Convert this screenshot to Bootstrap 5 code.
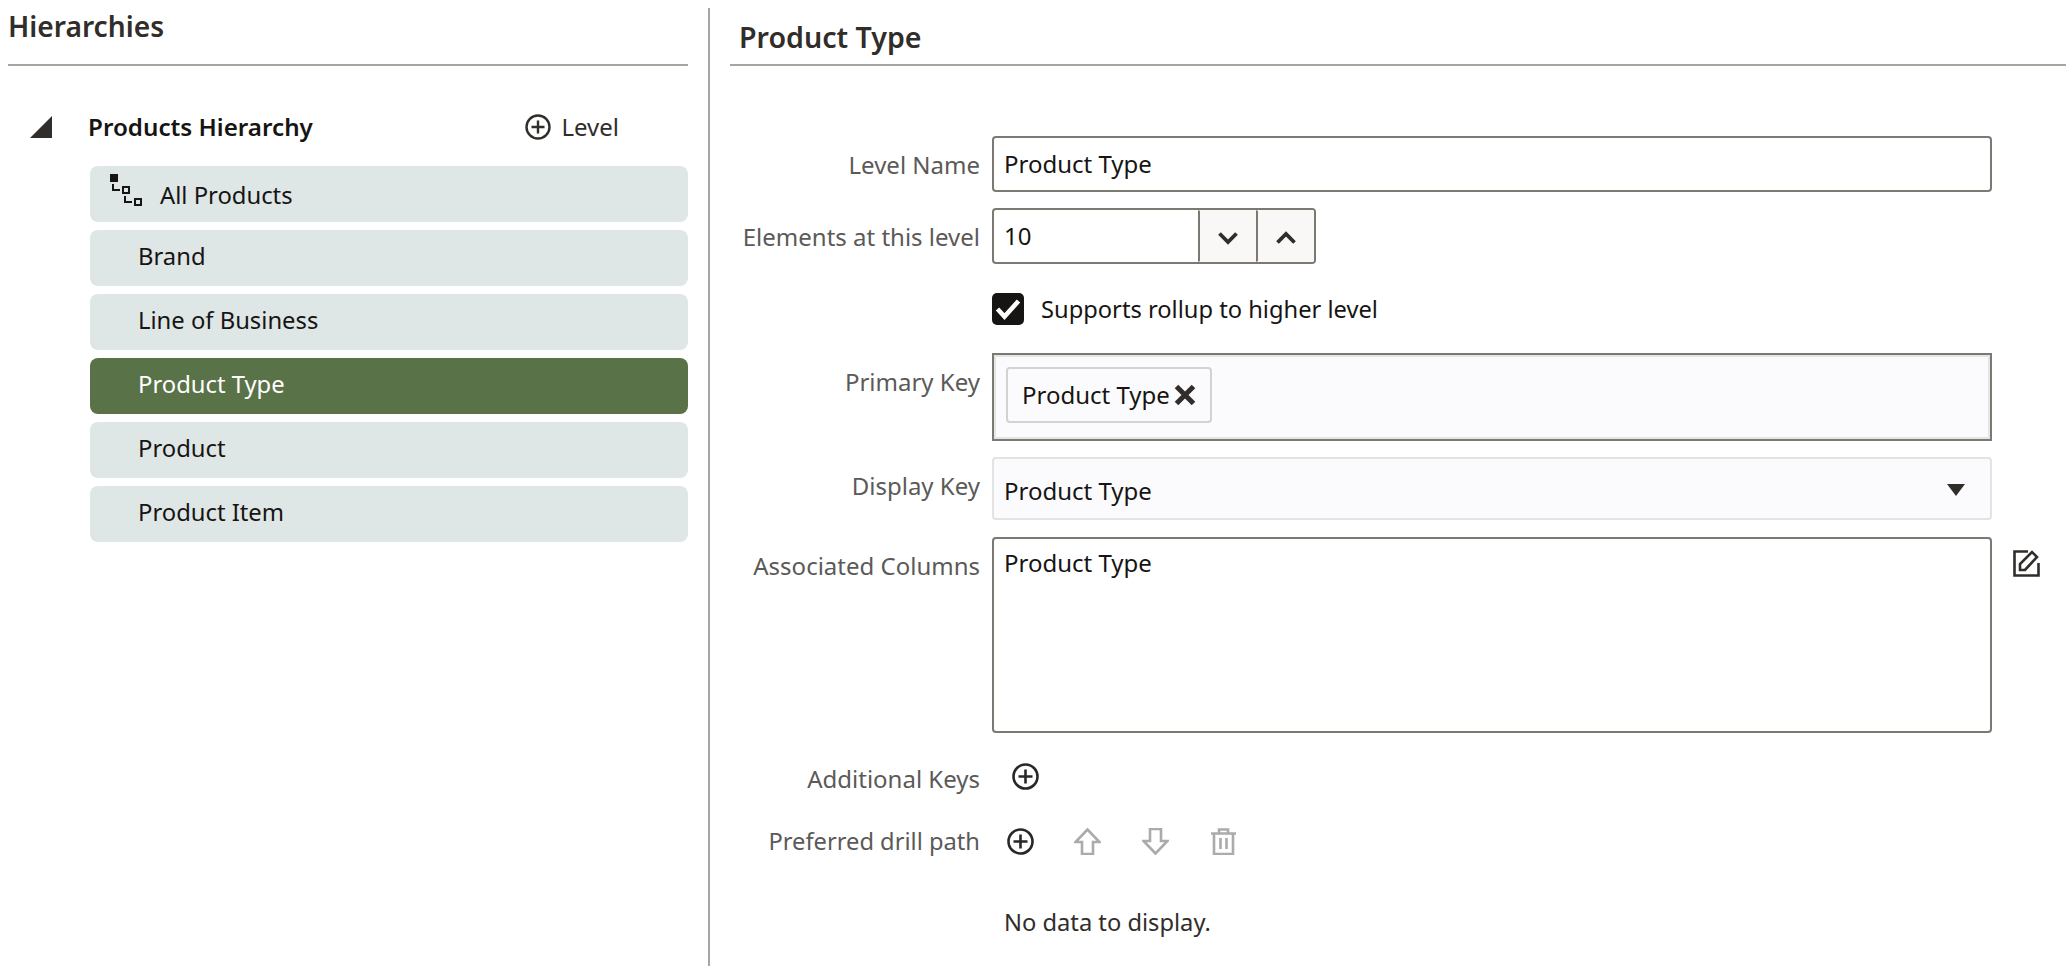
<!DOCTYPE html>
<html lang="en">
<head>
<meta charset="utf-8">
<title>Product Type</title>
<link href="https://cdn.jsdelivr.net/npm/bootstrap@5.3.0/dist/css/bootstrap.min.css" rel="stylesheet">
<style>
html,body{height:966px;overflow:hidden;background:#fff}
body{font-family:"Noto Sans","Open Sans",sans-serif;font-size:24px;color:#161513}
.shell{height:966px}
.pane-left{width:708px;padding:0 20px 0 8px;margin-top:8px;flex:none}
.divider{width:2px;background:#a8a5a0;margin-top:8px;flex:none}
.pane-right{flex:1;padding-left:20px;min-width:0}
.head-l{height:58px;border-bottom:2px solid #a8a5a0;font-size:28.200px;font-weight:600;line-height:37px;color:#312d2a}
.head-r{height:66px;border-bottom:2px solid #a8a5a0;font-size:28.600px;font-weight:600;line-height:74px;color:#312d2a;padding-left:9px}
.tree-head{height:50px;margin-top:36px;margin-bottom:14px}
.tree-tri{margin-left:22px;width:22px;height:22px;flex:none}
.tree-name{margin-left:36px;font-weight:600;color:#161513;font-size:24.200px}
.tree-add{margin-left:auto;margin-right:69px;color:#312d2a;font-size:24px;gap:10px}
.lvl{height:56px;margin-left:82px;margin-bottom:8px;border-radius:8px;background:#dfe6e6;padding-left:48px;line-height:53px;color:#161513;font-size:23.800px}
.lvl-on{background:#5a7248;color:#fff}
.lvl-root{padding-left:20px;line-height:59px}
.lvl-root svg{margin-top:8px;margin-right:18px;flex:none}
.fields{padding-right:74px;padding-top:70px}
.frow{display:flex;align-items:flex-start}
.flabel{width:250px;flex:none;margin-right:12px;text-align:right;color:#5b5a58;font-size:24px}
.lbl-a{padding-top:11px}
.lbl-drill{font-size:23.700px}
.fbody{flex:1;min-width:0}
.fbox.form-control{border:2px solid #7c7872;border-radius:4px;height:56px;padding:0 10px;line-height:52px;font-size:24px;color:#161513;background:#fff}
.stepper{width:324px;height:56px;border:2px solid #7c7872;border-radius:4px;overflow:hidden}
.stepper-val{flex:1;padding-left:10px;line-height:52px}
.stepper-btn{width:58px;flex:none;background:#f9f8f6;border-left:2px solid #7c7872;border-radius:0;padding:0}
.chk.form-check-input{width:32px;height:32px;margin:0;border:0;border-radius:5px;background-color:#161513;background-size:32px;background-image:url("data:image/svg+xml,%3csvg xmlns='http://www.w3.org/2000/svg' viewBox='0 0 32 32'%3e%3cpath fill='none' stroke='%23fff' stroke-width='4.600' d='M5.500 16l7 7.500L26.500 8'/%3e%3c/svg%3e")}
.chk-text{margin-left:17px;line-height:32px;font-size:23.700px}
.keybox{height:88px;border:2px solid #7c7872;box-shadow:inset 0 0 0 2px #e3e5e6;background:#fbfbfd;padding:12px 0 0 12px}
.keychip{height:56px;width:206px;border:2px solid #d0d2d4;border-radius:4px;background:#fbfbfd;padding-left:14px;line-height:52px;color:#161513}
.keychip svg{margin-left:4px}
.selbox{height:63px;border:2px solid #e2e3e5;border-radius:4px;background:#fbfbfd;padding:5px 25px 0 10px;line-height:58px}
.sel-arrow{margin-top:-3px}
.areabox.form-control{height:196px;border:2px solid #7c7872;border-radius:4px;padding:6px 10px;font-size:24px;line-height:36px;color:#161513;background:#fff}
.edit-wrap{width:0;position:relative;flex:none}
.edit-ico{position:absolute;left:21px;top:13px}
.drill-row svg{flex:none}
.nodata{margin-left:274px;margin-top:49px;line-height:36px;color:#312d2a;font-size:23.700px}
</style>
</head>
<body>
<div class="shell d-flex">
  <div class="pane-left">
    <div class="head-l">Hierarchies</div>
    <div class="tree-head d-flex align-items-center">
      <svg class="tree-tri" viewBox="0 0 22 22"><polygon points="22,0 22,22 0,22" fill="#312d2a"/></svg>
      <span class="tree-name">Products Hierarchy</span>
      <span class="tree-add d-flex align-items-center">
        <svg width="26" height="26" viewBox="0 0 26 26" fill="none" stroke="#312d2a" stroke-width="2.400"><circle cx="13" cy="13" r="11.500"/><path d="M13 6.500v13M6.500 13h13"/></svg>
        Level
      </span>
    </div>
    <div class="lvl lvl-root d-flex">
      <svg width="32" height="32" viewBox="0 0 32 32" fill="none" stroke="#161513" stroke-width="2"><rect width="8" height="8" fill="#161513" stroke="none"/><path d="M3 10v6h7"/><rect x="13" y="13" width="6" height="6"/><path d="M15 22v6h7"/><rect x="25" y="25" width="6" height="6"/></svg>
      All Products
    </div>
    <div class="lvl">Brand</div>
    <div class="lvl">Line of Business</div>
    <div class="lvl lvl-on">Product Type</div>
    <div class="lvl">Product</div>
    <div class="lvl">Product Item</div>
  </div>
  <div class="divider"></div>
  <div class="pane-right">
    <div class="head-r">Product Type</div>
    <div class="fields">
      <div class="frow mb-3">
        <div class="flabel lbl-a">Level Name</div>
        <div class="fbody"><div class="form-control fbox">Product Type</div></div>
      </div>
      <div class="frow">
        <div class="flabel lbl-a">Elements at this level</div>
        <div class="fbody">
          <div class="stepper d-flex">
            <div class="stepper-val">10</div>
            <button type="button" class="btn stepper-btn"><svg width="20" height="14" viewBox="0 0 20 14" fill="none" stroke="#312d2a" stroke-width="3.800"><path d="M1.500 2.500l8.500 8.500 8.500-8.500"/></svg></button>
            <button type="button" class="btn stepper-btn"><svg width="20" height="14" viewBox="0 0 20 14" fill="none" stroke="#312d2a" stroke-width="3.800"><path d="M1.500 11.500l8.500-8.500 8.500 8.500"/></svg></button>
          </div>
        </div>
      </div>
      <div class="frow" style="margin-top:29px">
        <div class="flabel"></div>
        <div class="fbody d-flex align-items-center">
          <input class="form-check-input chk" type="checkbox" checked>
          <span class="chk-text">Supports rollup to higher level</span>
        </div>
      </div>
      <div class="frow" style="margin-top:28px">
        <div class="flabel lbl-a">Primary Key</div>
        <div class="fbody">
          <div class="keybox">
            <div class="keychip d-flex align-items-center">Product Type<svg width="22" height="22" viewBox="0 0 22 22" stroke="#312d2a" stroke-width="5" fill="none"><path d="M2.500 2.500l17 17M19.500 2.500l-17 17"/></svg></div>
          </div>
        </div>
      </div>
      <div class="frow" style="margin-top:16px">
        <div class="flabel lbl-a">Display Key</div>
        <div class="fbody">
          <div class="selbox d-flex justify-content-between align-items-center">Product Type<svg class="sel-arrow" width="18" height="12" viewBox="0 0 18 12"><polygon points="0,0 18,0 9,12" fill="#312d2a"/></svg></div>
        </div>
      </div>
      <div class="frow" style="margin-top:17px">
        <div class="flabel lbl-a">Associated Columns</div>
        <div class="fbody"><div class="form-control areabox">Product Type</div></div>
        <div class="edit-wrap">
          <svg class="edit-ico" width="27" height="27" viewBox="0 0 27 27" fill="none" stroke="#312d2a" stroke-width="2.600"><path d="M15 1.500H1.500v24h24V13"/><path d="M7 20v-6L19 2l5 5-12 13z"/></svg>
        </div>
      </div>
      <div class="frow align-items-center" style="margin-top:31px;height:25px">
        <div class="flabel pt-1">Additional Keys</div>
        <svg width="27" height="27" viewBox="0 0 27 27" fill="none" stroke="#2a2826" stroke-width="2.600" style="margin-left:20px;flex:none"><circle cx="13.500" cy="13.500" r="12"/><path d="M13.500 6.500v14M6.500 13.500h14"/></svg>
      </div>
      <div class="frow align-items-center drill-row" style="margin-top:39px;height:27px">
        <div class="flabel lbl-drill">Preferred drill path</div>
        <svg width="27" height="27" viewBox="0 0 27 27" fill="none" stroke="#2a2826" stroke-width="2.600" style="margin-left:15px"><circle cx="13.500" cy="13.500" r="12"/><path d="M13.500 6.500v14M6.500 13.500h14"/></svg>
        <svg width="27" height="27" viewBox="0 0 27 27" fill="none" stroke="#ababab" stroke-width="2.600" style="margin-left:40px"><path d="M13.500 1.500L1.500 14H8v12h11V14h6.500z"/></svg>
        <svg width="27" height="27" viewBox="0 0 27 27" fill="none" stroke="#ababab" stroke-width="2.600" style="margin-left:41px"><path d="M13.500 25.500L1.500 13H8V1h11v12h6.500z"/></svg>
        <svg width="27" height="27" viewBox="0 0 27 27" fill="none" stroke="#ababab" stroke-width="2.600" style="margin-left:41px"><path d="M1 5.500h25M9 5.500V1.500h9v4M4 5.500V26h19V5.500M10.500 10v11M16.500 10v11"/></svg>
      </div>
      <div class="nodata">No data to display.</div>
    </div>
  </div>
</div>
<script src="https://cdn.jsdelivr.net/npm/bootstrap@5.3.0/dist/js/bootstrap.bundle.min.js"></script>
</body>
</html>
